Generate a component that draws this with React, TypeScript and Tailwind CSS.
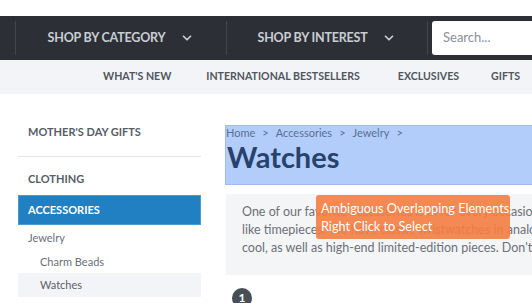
import { ChevronDown } from "lucide-react";

export default function App() {
  return (
    <div className="w-[532px] h-[303px] overflow-hidden bg-white font-['Lato',sans-serif] relative whitespace-nowrap">
      <div className="h-[16px] bg-white" />

      {/* dark header */}
      <div className="h-[44px] w-[700px] bg-[#2c3036] flex items-center">
        <div className="w-[15px] shrink-0" />
        <div className="w-[211px] shrink-0 h-[34px] border-l border-[#41454c] flex items-center justify-center gap-[15px] text-[#c9cdd3]">
          <span className="text-[12.5px] font-bold tracking-[-0.2px]">SHOP BY CATEGORY</span>
          <ChevronDown className="w-[14px] h-[14px]" strokeWidth={3} />
        </div>
        <div className="w-[201px] shrink-0 h-[34px] border-l border-[#41454c] flex items-center justify-center gap-[15px] text-[#c9cdd3]">
          <span className="text-[12.5px] font-bold tracking-[-0.2px]">SHOP BY INTEREST</span>
          <ChevronDown className="w-[14px] h-[14px]" strokeWidth={3} />
        </div>
        <div className="h-[34px] shrink-0 border-l border-[#41454c] pl-[4px]">
          <div className="h-[34px] w-[200px] bg-white rounded-l-[3px] flex items-center pl-[11px] text-[13px] text-[#8a8f96]">
            Search...
          </div>
        </div>
      </div>

      {/* secondary nav */}
      <div className="h-[34px] w-[700px] bg-[#f3f4f7] flex items-center text-[10.6px] font-bold text-[#50565e]">
        <span className="ml-[103px] shrink-0">WHAT'S NEW</span>
        <span className="ml-[35px] shrink-0">INTERNATIONAL BESTSELLERS</span>
        <span className="ml-[38px] shrink-0">EXCLUSIVES</span>
        <span className="ml-[32px] shrink-0">GIFTS</span>
      </div>

      <div className="flex w-[700px] pt-[26px]">
        {/* sidebar */}
        <div className="ml-[18px] w-[183px] shrink-0 flex flex-col">
          <div className="h-[24px] flex items-center pl-[10px] text-[11px] font-bold text-[#575d65]">
            MOTHER'S DAY GIFTS
          </div>
          <div className="h-px bg-[#e2e4e8] mt-[12px]" />
          <div className="h-[38px] flex items-center pl-[10px] pt-[6px] text-[11px] font-bold text-[#575d65]">
            CLOTHING
          </div>
          <div className="h-[30px] bg-[#2180c1] border border-[#4a9ad0] flex items-center pl-[9px] text-[11px] font-bold text-white">
            ACCESSORIES
          </div>
          <div className="h-[26px] flex items-center pl-[10px] text-[11px] text-[#6a7078]">Jewelry</div>
          <div className="h-[22px] flex items-center pl-[22px] text-[11px] text-[#6a7078]">Charm Beads</div>
          <div className="h-[24px] bg-[#f3f4f7] flex items-center pl-[22px] text-[11px] text-[#5a6068]">Watches</div>
        </div>

        {/* main */}
        <div className="ml-[25px] mt-[5px] w-[460px] shrink-0 flex flex-col relative">
          <div className="h-[60px] bg-[#b3cdfb] border border-[#9dbcf4] -ml-px">
            <div className="flex items-center gap-[7px] text-[11px] text-[#5a6f96] h-[12px] mt-px">
              <span>Home</span>
              <span>&gt;</span>
              <span>Accessories</span>
              <span>&gt;</span>
              <span>Jewelry</span>
              <span>&gt;</span>
            </div>
            <div className="text-[29px] font-bold text-[#27426c] leading-[34px] mt-[1px] ml-px">Watches</div>
          </div>

          <div className="mt-[9px] h-[81px] w-[400px] bg-[#f4f5f7] pl-[16px] pt-[9px] text-[12.5px] leading-[18px] text-[#6b7077]">
            <div>One of our favorite accessories is in for every occasion.</div>
            <div>like timepieces. We have classic wristwatches in analog and digital</div>
            <div>cool, as well as high-end limited-edition pieces. Don't miss</div>
          </div>

          <div className="mt-[13px] ml-[6px] w-[20px] h-[20px] rounded-full bg-[#4a4f57] flex items-center justify-center text-white text-[12px] font-bold">
            1
          </div>

          {/* overlay tooltip */}
          <div className="absolute left-[90px] top-[70px] w-[194px] h-[44px] rounded-[3px] bg-[#f47d40]/90 text-white text-[12.7px] leading-[18px] pl-[5px] pt-[4px]">
            <div>Ambiguous Overlapping Elements.</div>
            <div>Right Click to Select</div>
          </div>
        </div>
      </div>
    </div>
  );
}
